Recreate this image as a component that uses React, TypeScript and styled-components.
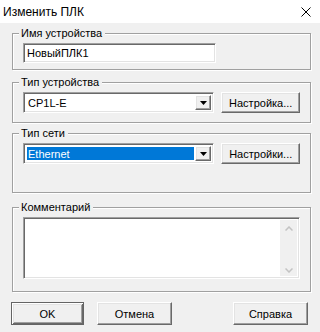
import React from "react";
import styled, { createGlobalStyle, css } from "styled-components";

const GlobalStyle = createGlobalStyle`
  html, body {
    margin: 0;
    padding: 0;
    background: #f0f0f0;
  }
  * {
    box-sizing: border-box;
  }
`;

const raised = css`
  border: 1px solid;
  border-color: #fff #696969 #696969 #fff;
  box-shadow: inset -1px -1px 0 #a0a0a0, inset 1px 1px 0 #e3e3e3;
`;

const sunken = css`
  border: 1px solid;
  border-color: #a0a0a0 #fff #fff #a0a0a0;
  box-shadow: inset 1px 1px 0 #696969, inset -1px -1px 0 #e3e3e3;
`;

const Dialog = styled.div`
  width: 320px;
  height: 332px;
  display: flex;
  flex-direction: column;
  background: #f0f0f0;
  font-family: "Liberation Sans", Arial, sans-serif;
  font-size: 11px;
  color: #000;
  overflow: hidden;
`;

const TitleBar = styled.div`
  flex: none;
  height: 23px;
  display: flex;
  align-items: center;
  justify-content: space-between;
  padding: 0 9px 0 3px;
  background: #fff;
`;

const Title = styled.span`
  font-size: 12px;
`;

const Body = styled.div`
  display: flex;
  flex-direction: column;
  padding: 4px 9px 0 12px;
`;

const Group = styled.fieldset<{ $gap: number; $bottom: number }>`
  width: 299px;
  min-width: 0;
  margin: ${(p) => p.$gap}px 0 0;
  padding: 3px 10px ${(p) => p.$bottom}px;
  border: 1px solid #a0a0a0;
  box-shadow: 1px 1px 0 #fff, inset 1px 1px 0 #fff;
`;

const Legend = styled.legend`
  margin-left: -4px;
  padding: 0 3px 0 2px;
  line-height: 13px;
  background: #f0f0f0;
`;

const Row = styled.div`
  display: flex;
  gap: 7px;
  align-items: flex-start;
`;

const TextField = styled.div`
  ${sunken};
  width: 193px;
  height: 20px;
  display: flex;
  align-items: center;
  padding: 0 3px;
  background: #fff;
`;

const Combo = styled.div`
  ${sunken};
  width: 195px;
  height: 21px;
  display: flex;
  align-items: stretch;
  padding: 2px;
  background: #fff;
`;

const ComboValue = styled.div<{ $selected?: boolean }>`
  flex: 1;
  display: flex;
  align-items: center;
  margin: 1px 1px 1px 1px;
  padding: 0 1px;
  background: ${(p) => (p.$selected ? "#0078d7" : "#fff")};
  color: ${(p) => (p.$selected ? "#fff" : "#000")};
`;

const DropButton = styled.div`
  ${raised};
  width: 16px;
  display: flex;
  align-items: center;
  justify-content: center;
  background: #f0f0f0;
`;

const Button = styled.button<{ $width: number; $default?: boolean }>`
  width: ${(p) => p.$width}px;
  height: 23px;
  padding: 0;
  font: inherit;
  color: #000;
  background: #f0f0f0;
  ${raised};
  ${(p) =>
    p.$default &&
    css`
      border: 1px solid #646464;
      box-shadow: inset 1px 1px 0 #fff, inset -1px -1px 0 #696969,
        inset 2px 2px 0 #e3e3e3, inset -2px -2px 0 #a0a0a0;
    `}
`;

const SideButton = styled(Button)`
  height: 21px;
`;

const Memo = styled.div`
  ${sunken};
  width: 277px;
  height: 62px;
  display: flex;
  padding: 2px;
  background: #fff;
`;

const MemoText = styled.div`
  flex: 1;
`;

const Scrollbar = styled.div`
  width: 17px;
  display: flex;
  flex-direction: column;
  justify-content: space-between;
  align-items: center;
  padding: 6px 0 3px;
  background: #f0f0f0;
`;

const ButtonRow = styled.div`
  display: flex;
  gap: 13px;
  margin: 10px 3px 0 -1px;
`;

const Spacer = styled.div`
  flex: 1;
`;

const CloseIcon = () => (
  <svg width="10" height="10" viewBox="0 0 10 10">
    <path d="M0.5 0.5 L9.5 9.5 M9.5 0.5 L0.5 9.5" stroke="#000" strokeWidth="1" />
  </svg>
);

const DropArrow = () => (
  <svg width="7" height="4" viewBox="0 0 7 4">
    <path d="M0 0 H7 L3.5 4 Z" fill="#000" />
  </svg>
);

const Chevron = ({ up }: { up?: boolean }) => (
  <svg width="8" height="5" viewBox="0 0 8 5">
    <path
      d={up ? "M0.5 4.5 L4 1 L7.5 4.5" : "M0.5 0.5 L4 4 L7.5 0.5"}
      fill="none"
      stroke="#c3c3c3"
      strokeWidth="1.5"
    />
  </svg>
);

const ComboBox = ({ value, selected }: { value: string; selected?: boolean }) => (
  <Combo>
    <ComboValue $selected={selected}>{value}</ComboValue>
    <DropButton>
      <DropArrow />
    </DropButton>
  </Combo>
);

export default function App() {
  return (
    <>
      <GlobalStyle />
      <Dialog>
        <TitleBar>
          <Title>Изменить ПЛК</Title>
          <CloseIcon />
        </TitleBar>
        <Body>
          <Group $gap={0} $bottom={6}>
            <Legend>Имя устройства</Legend>
            <TextField>НовыйПЛК1</TextField>
          </Group>
          <Group $gap={6} $bottom={9}>
            <Legend>Тип устройства</Legend>
            <Row>
              <ComboBox value="CP1L-E" />
              <SideButton $width={80}>Настройка...</SideButton>
            </Row>
          </Group>
          <Group $gap={4} $bottom={28}>
            <Legend>Тип сети</Legend>
            <Row>
              <ComboBox value="Ethernet" selected />
              <SideButton $width={80}>Настройки...</SideButton>
            </Row>
          </Group>
          <Group $gap={8} $bottom={12}>
            <Legend>Комментарий</Legend>
            <Memo>
              <MemoText />
              <Scrollbar>
                <Chevron up />
                <Chevron />
              </Scrollbar>
            </Memo>
          </Group>
          <ButtonRow>
            <Button $width={73} $default>
              OK
            </Button>
            <Button $width={75}>Отмена</Button>
            <Spacer />
            <Button $width={75}>Справка</Button>
          </ButtonRow>
        </Body>
      </Dialog>
    </>
  );
}
